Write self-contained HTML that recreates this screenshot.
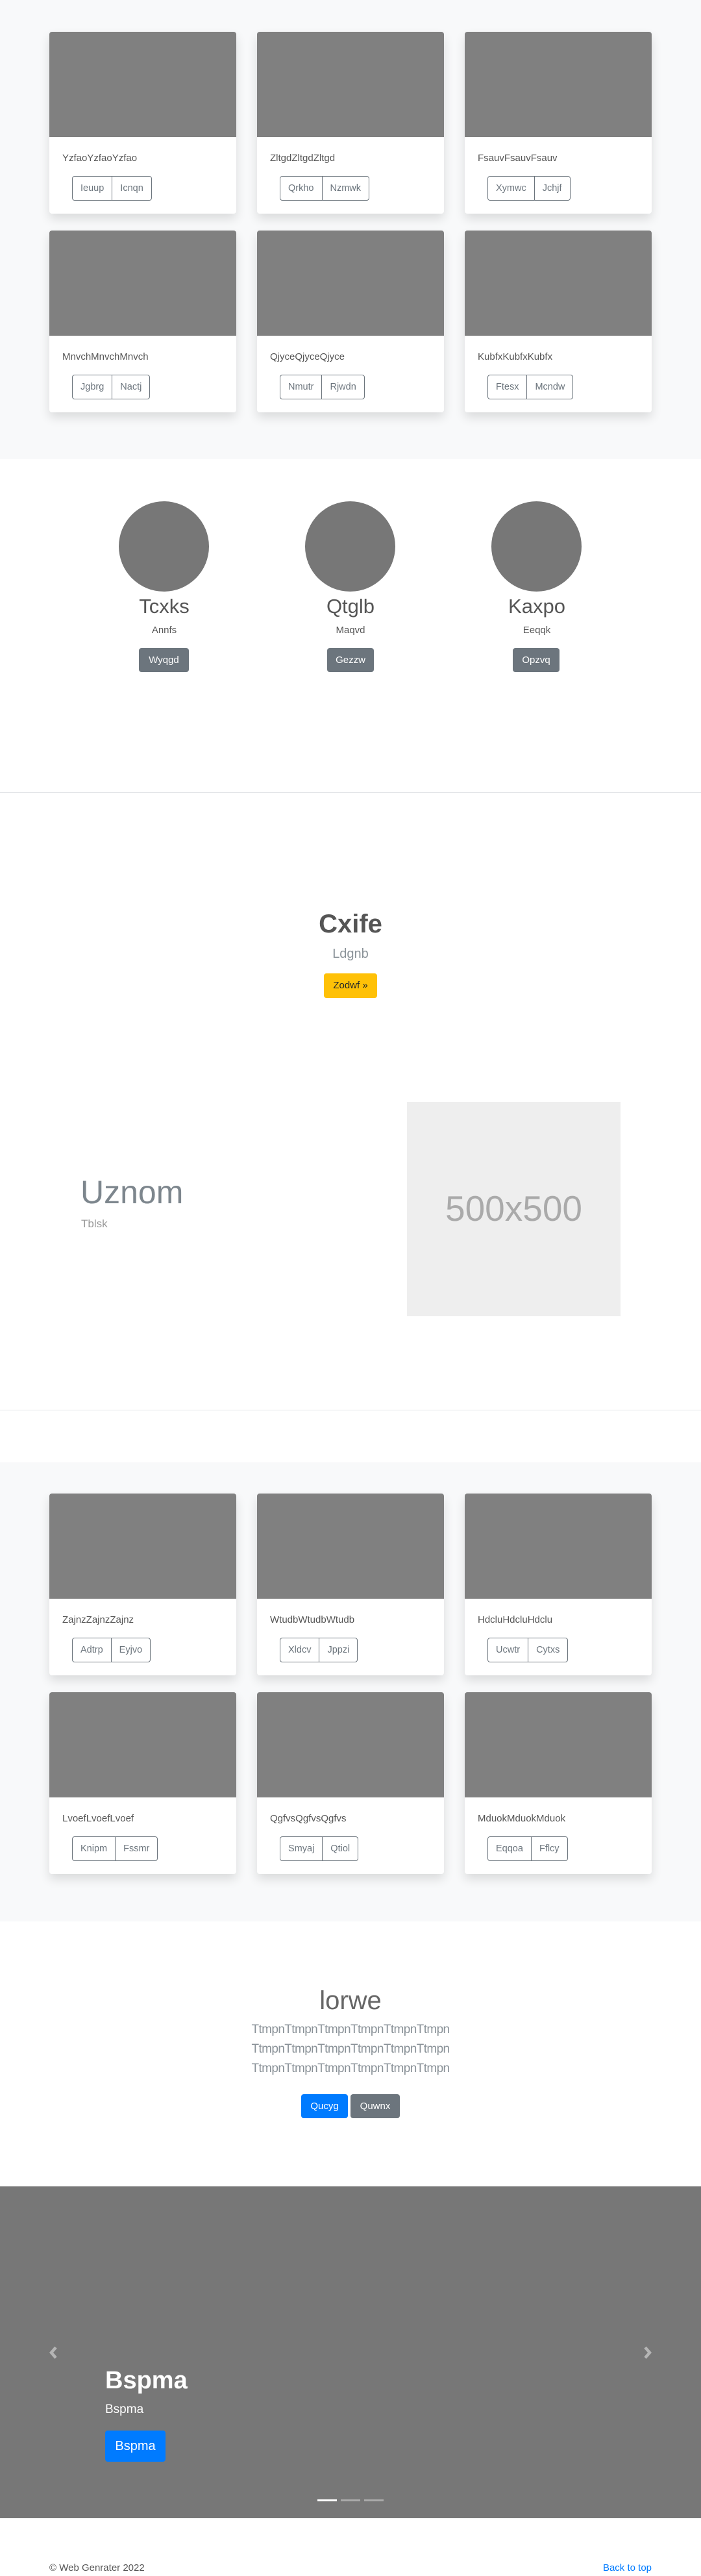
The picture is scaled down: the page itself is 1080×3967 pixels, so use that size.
<!DOCTYPE html>
<html><head><meta charset="utf-8">
<style>
*{box-sizing:border-box;margin:0;padding:0}
body{width:1080px;height:3967px;position:relative;font-family:"Liberation Sans",sans-serif;background:#fff;overflow:hidden}
.a{position:absolute}
.t{position:absolute;line-height:1;white-space:nowrap}
.sec{position:absolute;left:0;width:1080px;background:#f8f9fa}
.card{position:absolute;width:288px;height:280px;background:#fff;border-radius:4px;box-shadow:0 8px 16px rgba(0,0,0,.12);overflow:hidden}
.card .img{position:absolute;left:0;top:0;width:288px;height:162px;background:#808080}
.card .ct{position:absolute;left:20px;top:187px;font-size:15px;color:#555;line-height:1;white-space:nowrap}
.bg{position:absolute;left:35px;top:222px;height:38px;display:flex;border:1px solid #6c757d;border-radius:4px}
.bg span{display:block;padding:0 12px;line-height:36px;font-size:14.5px;color:#6c757d}
.bg span+span{border-left:1px solid #6c757d}
.btn{position:absolute;border-radius:4px;color:#fff;text-align:center;font-size:15px}
.hr{position:absolute;left:0;width:1080px;height:1px;background:#e3e5e8}
.c{text-align:center}
</style></head><body>

<div class="sec" style="top:0;height:707px"></div>
<div class="sec" style="top:2252px;height:707px"></div>

<div class="card" style="left:76px;top:49px"><div class="img"></div><div class="ct">YzfaoYzfaoYzfao</div><div class="bg"><span>Ieuup</span><span>Icnqn</span></div></div>
<div class="card" style="left:396px;top:49px"><div class="img"></div><div class="ct">ZltgdZltgdZltgd</div><div class="bg"><span>Qrkho</span><span>Nzmwk</span></div></div>
<div class="card" style="left:716px;top:49px"><div class="img"></div><div class="ct">FsauvFsauvFsauv</div><div class="bg"><span>Xymwc</span><span>Jchjf</span></div></div>
<div class="card" style="left:76px;top:355px"><div class="img"></div><div class="ct">MnvchMnvchMnvch</div><div class="bg"><span>Jgbrg</span><span>Nactj</span></div></div>
<div class="card" style="left:396px;top:355px"><div class="img"></div><div class="ct">QjyceQjyceQjyce</div><div class="bg"><span>Nmutr</span><span>Rjwdn</span></div></div>
<div class="card" style="left:716px;top:355px"><div class="img"></div><div class="ct">KubfxKubfxKubfx</div><div class="bg"><span>Ftesx</span><span>Mcndw</span></div></div>

<div class="a" style="left:183px;top:772px;width:139px;height:139px;border-radius:50%;background:#777"></div>
<div class="a" style="left:470px;top:772px;width:139px;height:139px;border-radius:50%;background:#777"></div>
<div class="a" style="left:757px;top:772px;width:139px;height:139px;border-radius:50%;background:#777"></div>
<div class="t c" style="left:153px;width:200px;top:918px;font-size:31px;color:#555">Tcxks</div>
<div class="t c" style="left:440px;width:200px;top:918px;font-size:31px;color:#555">Qtglb</div>
<div class="t c" style="left:727px;width:200px;top:918px;font-size:31px;color:#555">Kaxpo</div>
<div class="t c" style="left:153px;width:200px;top:963px;font-size:15px;color:#555">Annfs</div>
<div class="t c" style="left:440px;width:200px;top:963px;font-size:15px;color:#555">Maqvd</div>
<div class="t c" style="left:727px;width:200px;top:963px;font-size:15px;color:#555">Eeqqk</div>
<div class="btn" style="left:214px;top:998px;width:77px;height:37px;line-height:37px;background:#6c757d">Wyqgd</div>
<div class="btn" style="left:504px;top:998px;width:72px;height:37px;line-height:37px;background:#6c757d">Gezzw</div>
<div class="btn" style="left:790px;top:998px;width:72px;height:37px;line-height:37px;background:#6c757d">Opzvq</div>

<div class="hr" style="top:1220px"></div>

<div class="t c" style="left:0;width:1080px;top:1403px;font-size:40px;font-weight:bold;color:#555">Cxife</div>
<div class="t c" style="left:0;width:1080px;top:1459px;font-size:20px;color:#8a9298">Ldgnb</div>
<div class="btn" style="left:499px;top:1499px;width:82px;height:38px;line-height:38px;background:#ffc107;color:#212529">Zodwf »</div>

<div class="t" style="left:124px;top:1811px;font-size:50px;color:#7d868d">Uznom</div>
<div class="t" style="left:125px;top:1876px;font-size:17px;color:#999">Tblsk</div>
<div class="a" style="left:627px;top:1697px;width:329px;height:330px;background:#eee"></div>
<div class="t c" style="left:627px;width:329px;top:1834px;font-size:55px;color:#aaa">500x500</div>

<div class="hr" style="top:2171px"></div>

<div class="card" style="left:76px;top:2300px"><div class="img"></div><div class="ct">ZajnzZajnzZajnz</div><div class="bg"><span>Adtrp</span><span>Eyjvo</span></div></div>
<div class="card" style="left:396px;top:2300px"><div class="img"></div><div class="ct">WtudbWtudbWtudb</div><div class="bg"><span>Xldcv</span><span>Jppzi</span></div></div>
<div class="card" style="left:716px;top:2300px"><div class="img"></div><div class="ct">HdcluHdcluHdclu</div><div class="bg"><span>Ucwtr</span><span>Cytxs</span></div></div>
<div class="card" style="left:76px;top:2606px"><div class="img"></div><div class="ct">LvoefLvoefLvoef</div><div class="bg"><span>Knipm</span><span>Fssmr</span></div></div>
<div class="card" style="left:396px;top:2606px"><div class="img"></div><div class="ct">QgfvsQgfvsQgfvs</div><div class="bg"><span>Smyaj</span><span>Qtiol</span></div></div>
<div class="card" style="left:716px;top:2606px"><div class="img"></div><div class="ct">MduokMduokMduok</div><div class="bg"><span>Eqqoa</span><span>Fflcy</span></div></div>

<div class="t c" style="left:0;width:1080px;top:3061px;font-size:40px;color:#666">lorwe</div>
<div class="a c" style="left:0;width:1080px;top:3111px;font-size:19px;line-height:30px;color:#8a9298;letter-spacing:-0.6px">TtmpnTtmpnTtmpnTtmpnTtmpnTtmpn<br>TtmpnTtmpnTtmpnTtmpnTtmpnTtmpn<br>TtmpnTtmpnTtmpnTtmpnTtmpnTtmpn</div>
<div class="btn" style="left:464px;top:3225px;width:72px;height:37px;line-height:37px;background:#007bff">Qucyg</div>
<div class="btn" style="left:540px;top:3225px;width:76px;height:37px;line-height:37px;background:#6c757d">Quwnx</div>

<div class="a" style="left:0;top:3367px;width:1080px;height:511px;background:#777"></div>
<svg class="a" style="left:74px;top:3612px" width="16" height="22" viewBox="0 0 16 22"><path d="M12 3 L5 11 L12 19" fill="none" stroke="#b5b5b5" stroke-width="4.5"/></svg>
<svg class="a" style="left:990px;top:3612px" width="16" height="22" viewBox="0 0 16 22"><path d="M4 3 L11 11 L4 19" fill="none" stroke="#b5b5b5" stroke-width="4.5"/></svg>
<div class="t" style="left:162px;top:3647px;font-size:38px;font-weight:bold;color:#fff">Bspma</div>
<div class="t" style="left:162px;top:3701px;font-size:19px;color:#fff">Bspma</div>
<div class="btn" style="left:162px;top:3743px;width:93px;height:48px;line-height:48px;background:#007bff;font-size:20px">Bspma</div>
<div class="a" style="left:489px;top:3849px;width:30px;height:3px;background:#fff"></div>
<div class="a" style="left:525px;top:3849px;width:30px;height:3px;background:#aaa"></div>
<div class="a" style="left:561px;top:3849px;width:30px;height:3px;background:#aaa"></div>

<div class="t" style="left:76px;top:3947px;font-size:15px;color:#555">© Web Genrater 2022</div>
<div class="t" style="left:804px;width:200px;text-align:right;top:3947px;font-size:15px;color:#007bff">Back to top</div>
</body></html>
